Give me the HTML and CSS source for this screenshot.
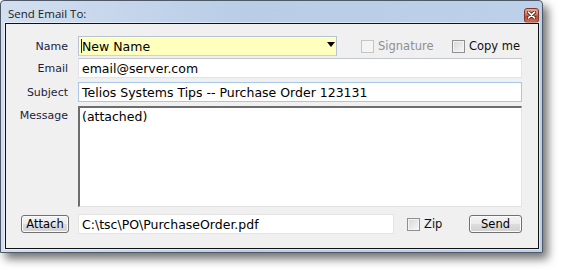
FILE: index.html
```html
<!DOCTYPE html>
<html lang="en">
<head>
    <meta charset="UTF-8">
    <title>Send Email To</title>
    <link rel="stylesheet" href="styles.css">
</head>
<body>
    <div class="window">
        <div class="titlebar">
            <span class="title">Send Email To:</span>
            <span class="close">
                <svg width="9" height="8" viewBox="0 0 9 8">
                    <path d="M1.5 1.2 L7.5 6.8 M7.5 1.2 L1.5 6.8" stroke="#4a1a12" stroke-width="3.4" stroke-linecap="round"/>
                    <path d="M1.5 1.2 L7.5 6.8 M7.5 1.2 L1.5 6.8" stroke="#fff" stroke-width="1.8" stroke-linecap="round"/>
                </svg>
            </span>
        </div>
        <div class="client">
            <div class="row row-name">
                <div class="lbl">Name</div>
                <div class="combo"><span class="caret"></span>New Name<span class="arrow"></span></div>
                <div class="check sig disabled"><span class="box"></span>Signature</div>
                <div class="check"><span class="box"></span>Copy me</div>
            </div>
            <div class="row row-email">
                <div class="lbl">Email</div>
                <div class="field">email@server.com</div>
            </div>
            <div class="row row-subject">
                <div class="lbl">Subject</div>
                <div class="field focus">Telios Systems Tips -- Purchase Order 123131</div>
            </div>
            <div class="row row-msg">
                <div class="lbl">Message</div>
                <div class="memo">(attached)</div>
            </div>
            <div class="row row-attach">
                <div class="lbl"><span class="btn attach">Attach</span></div>
                <div class="field file">C:\tsc\PO\PurchaseOrder.pdf</div>
                <div class="check zip"><span class="box"></span>Zip</div>
                <span class="btn send">Send</span>
            </div>
        </div>
    </div>
</body>
</html>
```

FILE: styles.css
```css
body {
    margin: 0;
    padding: 0;
    min-height: 100vh;
    background: #fff;
    font-family: "DejaVu Sans", Verdana, sans-serif;
}
.window {
    width: 543px;
    height: 253px;
    border: 1px solid #4e5866;
    border-radius: 4px 4px 0 0;
    background: linear-gradient(to right, #d2dff0, #b9cde7 45%, #bdd0e9 100%);
    box-shadow: 5px 6px 10px rgba(0, 0, 0, 0.55);
    display: flex;
    flex-direction: column;
    padding: 0 3px 3px 4px;
    box-sizing: border-box;
}
.titlebar {
    height: 22px;
    display: flex;
    align-items: center;
    justify-content: space-between;
    padding-left: 3px;
}
.title {
    font-family: "Open Sans", sans-serif;
    font-size: 11.5px;
    color: #1a1a1a;
    margin-top: 2px;
}
.close {
    width: 13px;
    height: 13px;
    border: 1px solid #7a3b2e;
    border-radius: 3px;
    background: linear-gradient(#e9a899, #d4725d 45%, #c2452c 55%, #cf6a4f);
    display: flex;
    align-items: center;
    justify-content: center;
    margin-top: 6px;
}
.client {
    flex: 1;
    background: #f0f0f0;
    border: 1px solid #111;
    box-shadow: 0 0 0 1px rgba(255, 255, 255, 0.5);
    padding: 12px 16px 0 0;
    display: flex;
    flex-direction: column;
}
.row {
    display: flex;
    align-items: center;
    gap: 10px;
}
.lbl {
    width: 62px;
    flex: none;
    text-align: right;
    font-size: 11px;
    color: #1c1c44;
    display: flex;
    justify-content: flex-end;
}
.row-name {
    height: 20px;
}
.row-email {
    height: 20px;
    margin-top: 2px;
}
.row-subject {
    height: 20px;
    margin-top: 4px;
}
.row-msg {
    align-items: flex-start;
    margin-top: 4px;
}
.row-msg .lbl {
    padding-top: 3px;
}
.row-attach {
    height: 20px;
    margin-top: 7px;
}
.combo, .field, .memo {
    font-size: 12.5px;
    color: #000;
    box-sizing: border-box;
    display: flex;
    align-items: center;
    padding-left: 3px;
    white-space: nowrap;
}
.combo {
    flex: none;
    width: 259px;
    height: 20px;
    background: #ffffbe;
    border: 1px solid #b7c3d1;
    border-bottom-color: #c9d3de;
    position: relative;
}
.caret {
    width: 1px;
    height: 14px;
    background: #1a1a5e;
    position: absolute;
    left: 2px;
    top: 2px;
}
.arrow {
    position: absolute;
    right: 1px;
    top: 5px;
    width: 0;
    height: 0;
    border-left: 4px solid transparent;
    border-right: 4px solid transparent;
    border-top: 5px solid #000;
}
.field {
    flex: 1;
    height: 20px;
    background: #fff;
    border: 1px solid #e2e3ea;
    border-top-color: #c3c6cc;
}
.field.focus {
    border-color: #a6c7e6;
}
.field.file {
    flex: none;
    width: 316px;
    border-color: #e4e4e4;
}
.memo {
    flex: 1;
    height: 101px;
    background: #fff;
    border-style: solid;
    border-width: 2px 1px 1px 2px;
    border-color: #6d6d6d #e3e3e3 #e3e3e3 #6d6d6d;
    align-items: flex-start;
    padding-left: 2px;
    padding-top: 1px;
}
.check {
    display: flex;
    align-items: center;
    gap: 4px;
    font-size: 11.5px;
    color: #111;
    white-space: nowrap;
}
.check .box {
    width: 11px;
    height: 11px;
    border: 1px solid #8e8f8f;
    background: linear-gradient(135deg, #d6d6d6, #f8f8f8);
    box-shadow: inset 0 0 0 1px #f4f4f4;
    flex: none;
}
.check.sig {
    flex: none;
    width: 81px;
    margin-left: 14px;
}
.check.disabled {
    color: #8f8f8f;
}
.check.disabled .box {
    border-color: #c5c5c5;
    background: #f4f4f4;
}
.check.zip {
    margin-left: 3px;
}
.btn {
    display: flex;
    align-items: center;
    justify-content: center;
    height: 16px;
    border: 1px solid #707070;
    border-radius: 3px;
    background: linear-gradient(#f3f3f3, #ebebeb 50%, #dddddd 51%, #d0d0d0);
    box-shadow: inset 0 0 0 1px #fbfbfb;
    font-size: 11.5px;
    color: #000;
}
.btn.attach {
    width: 46px;
    margin-right: -1px;
}
.btn.send {
    width: 51px;
    margin-left: auto;
}
```
